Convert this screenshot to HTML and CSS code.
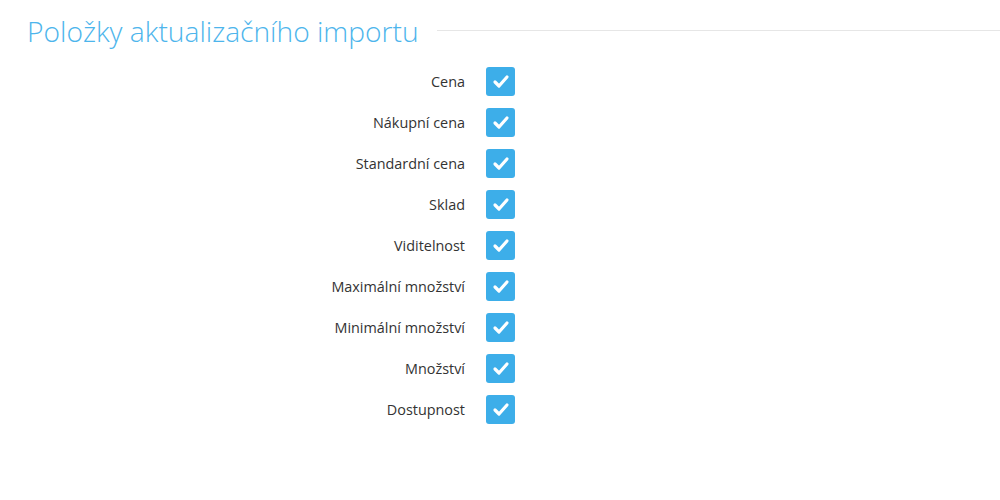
FILE: index.html
```html
<!DOCTYPE html>
<html lang="cs">
<head>
<meta charset="utf-8">
<link rel="stylesheet" href="styles.css">
</head>
<body>
<div class="panel">
  <div class="heading">
    <h2 class="title">Položky aktualizačního importu</h2>
    <div class="rule"></div>
  </div>
  <div class="form">
    <div class="row"><span class="label">Cena</span><span class="check"><svg viewBox="0 0 29 29"><path d="M9 15l4 4 8-9"/></svg></span></div>
    <div class="row"><span class="label">Nákupní cena</span><span class="check"><svg viewBox="0 0 29 29"><path d="M9 15l4 4 8-9"/></svg></span></div>
    <div class="row"><span class="label">Standardní cena</span><span class="check"><svg viewBox="0 0 29 29"><path d="M9 15l4 4 8-9"/></svg></span></div>
    <div class="row"><span class="label">Sklad</span><span class="check"><svg viewBox="0 0 29 29"><path d="M9 15l4 4 8-9"/></svg></span></div>
    <div class="row"><span class="label">Viditelnost</span><span class="check"><svg viewBox="0 0 29 29"><path d="M9 15l4 4 8-9"/></svg></span></div>
    <div class="row"><span class="label">Maximální množství</span><span class="check"><svg viewBox="0 0 29 29"><path d="M9 15l4 4 8-9"/></svg></span></div>
    <div class="row"><span class="label">Minimální množství</span><span class="check"><svg viewBox="0 0 29 29"><path d="M9 15l4 4 8-9"/></svg></span></div>
    <div class="row"><span class="label">Množství</span><span class="check"><svg viewBox="0 0 29 29"><path d="M9 15l4 4 8-9"/></svg></span></div>
    <div class="row"><span class="label">Dostupnost</span><span class="check"><svg viewBox="0 0 29 29"><path d="M9 15l4 4 8-9"/></svg></span></div>
  </div>
</div>
</body>
</html>
```

FILE: styles.css
```css
html, body {
  margin: 0;
  padding: 0;
  background: #fff;
}
body {
  font-family: "Open Sans", "Liberation Sans", sans-serif;
  color: #333;
}
.panel {
  padding: 12px 0 0 27px;
}
.heading {
  display: flex;
  align-items: center;
  gap: 18px;
}
.title {
  margin: 0;
  font-size: 28.2px;
  font-weight: 300;
  color: #4db5ec;
  line-height: 38px;
  white-space: nowrap;
}
.rule {
  flex: 1;
  height: 1px;
  background: #e6e6e6;
  margin-top: -2px;
}
.form {
  display: flex;
  flex-direction: column;
  gap: 12px;
  margin-top: 17px;
}
.row {
  display: flex;
  align-items: center;
  gap: 21px;
  height: 29px;
}
.label {
  width: 438px;
  text-align: right;
  font-size: 14.4px;
}
.check {
  width: 29px;
  height: 29px;
  border-radius: 3px;
  background: #3daee9;
  display: flex;
}
.check svg {
  width: 29px;
  height: 29px;
}
.check path {
  fill: none;
  stroke: #fff;
  stroke-width: 3.2;
  stroke-linecap: round;
  stroke-linejoin: round;
}
```
